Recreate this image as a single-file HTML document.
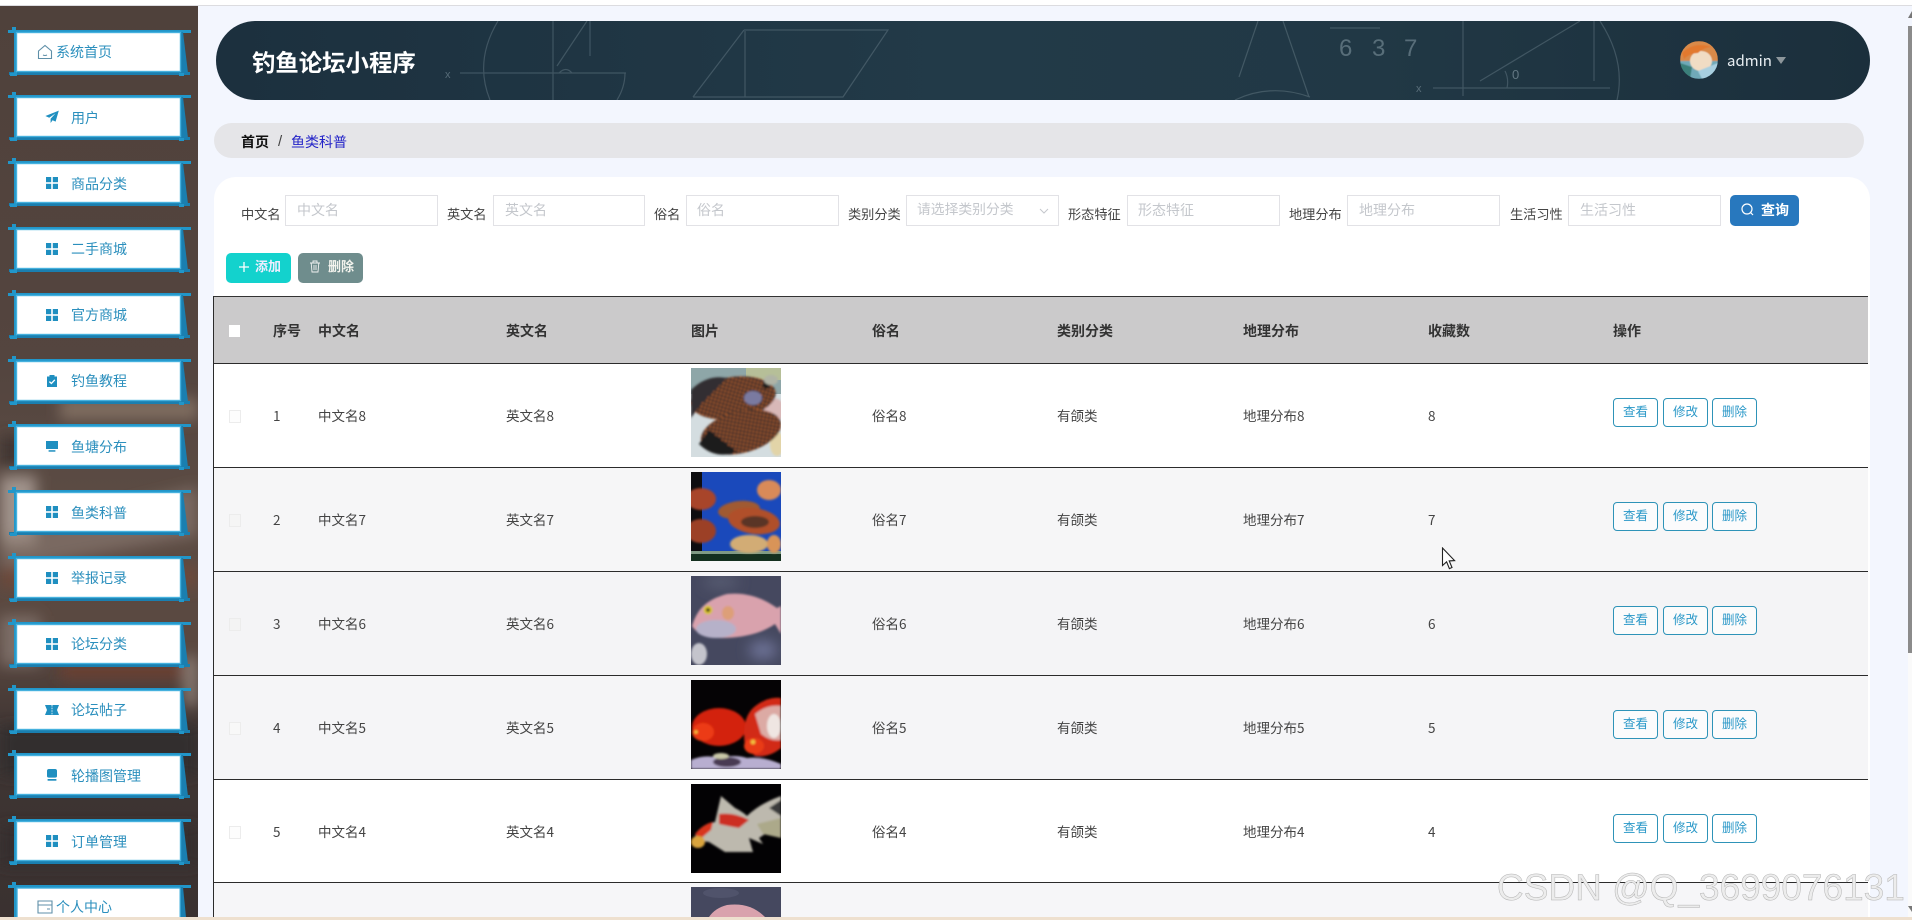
<!DOCTYPE html>
<html lang="zh-CN"><head><meta charset="utf-8"><title>钓鱼论坛小程序</title>
<style>
html,body{margin:0;padding:0;width:1912px;height:920px;overflow:hidden;background:#f3f6fe;font-family:"Liberation Sans","Noto Sans CJK SC",sans-serif}
#wrap{position:relative;width:1912px;height:920px;overflow:hidden;background:#f3f6fe}
.a,.t,.ph,.l,.h,.c,.b,.m{position:absolute;white-space:nowrap}
.t,.l,.h,.c,.ph,.m{line-height:20px}
.l{font-size:13.2px;color:#444;top:205px}
.ph{font-size:14px;color:#c4c7cc;top:200px}
.inp{position:absolute;top:195px;height:29px;border:1px solid #e2e2e6;background:#fff;box-sizing:content-box}
.h{font-size:14px;font-weight:bold;color:#333;top:321px}
.r{position:absolute;left:0;width:0;height:0}
.bg{position:absolute;left:214px;top:0;width:1654px;height:103px}
.line{position:absolute;left:214px;width:1654px;height:1px;background:#2b2b2b}
.c{font-size:13.5px;color:#444;top:42px;font-family:"Noto Sans CJK SC","Liberation Sans",sans-serif}
.b{top:35px;width:43px;height:27px;border:1px solid #2e93b8;border-radius:4px;text-align:center;line-height:27px;font-size:12.5px;color:#2a98c8;background:rgba(255,255,255,.6)}
.cb{position:absolute;left:229px;top:47px;width:10px;height:11px;border:1px solid #ececec;background:#fdfdfd}
.fish{position:absolute;left:691px;top:5px;width:90px;height:89px}
.m{left:71px;font-size:14px;color:#2b8fbd;margin-top:-9.5px}
.fr,.ic{position:absolute}
.fr{left:0;width:198px;height:50px;margin-top:-25px}
.ic{width:14px;height:14px;left:45px;margin-top:-7px}
</style></head><body>
<div id="wrap">

<svg width="0" height="0" style="position:absolute">
<defs>
<symbol id="frame" viewBox="0 0 198 50">
<rect x="8" y="3" width="183" height="3" fill="#2196c9"/>
<rect x="9" y="45" width="181" height="3" fill="#1a7fb0"/>
<rect x="14" y="3" width="3" height="44" fill="#2296c8"/>
<polygon points="180,5 183,5 188,46 180,47" fill="#1a7fb0"/>
<rect x="12" y="0" width="4" height="4" fill="#2196c9"/>
<rect x="10" y="46" width="7" height="3" fill="#2196c9"/>
<rect x="179" y="46" width="5" height="3" fill="#2196c9"/>
<rect x="16.5" y="5.5" width="164" height="39" fill="#fff" stroke="#46b1de" stroke-width="1.4"/>
</symbol>
<symbol id="grid" viewBox="0 0 14 14"><g fill="#1f8fc0"><rect x="1" y="1" width="5.2" height="5.2"/><rect x="7.8" y="1" width="5.2" height="5.2"/><rect x="1" y="7.8" width="5.2" height="5.2"/><rect x="7.8" y="7.8" width="5.2" height="5.2"/></g></symbol>
<symbol id="plane" viewBox="0 0 14 14"><path d="M13.8 0.6 L0.4 6 L4.2 7.8 L10.5 3.4 L5.6 8.8 L5.6 13 L7.6 10.2 L10.6 11.6Z" fill="#1f8fc0"/></symbol>
<symbol id="clip" viewBox="0 0 14 14"><path d="M2 2.5H4.5V1H9.5V2.5H12V13H2Z" fill="#1f8fc0"/><path d="M4.4 7.6L6.4 9.5L9.8 5.8" fill="none" stroke="#fff" stroke-width="1.3"/></symbol>
<symbol id="mon" viewBox="0 0 14 14"><path d="M1 2H13V10H1Z" fill="#1f8fc0"/><rect x="3.6" y="11.2" width="6.8" height="1.5" fill="#1f8fc0"/></symbol>
<symbol id="mon2" viewBox="0 0 14 14"><path d="M2 3Q2 1 4 1H10Q12 1 12 3V8Q12 9.6 10 9.6H4Q2 9.6 2 8Z" fill="#1f8fc0"/><rect x="2.6" y="11" width="8.8" height="1.7" fill="#1f8fc0"/></symbol>
<symbol id="tick" viewBox="0 0 14 14"><path d="M0 2H14L12 7L14 12H0L2 7Z" fill="#1f8fc0"/><path d="M7 2V12" stroke="#fff" stroke-width=".8" stroke-dasharray="1.6 1"/></symbol>
<filter id="sb"><feGaussianBlur stdDeviation="1.1"/></filter>
<filter id="sa"><feGaussianBlur stdDeviation=".5"/></filter>
<filter id="bl"><feGaussianBlur stdDeviation="7"/></filter>
<pattern id="sp" width="3.6" height="3.6" patternUnits="userSpaceOnUse" patternTransform="rotate(25)"><rect width="3.6" height="3.6" fill="#3e2f2c"/><circle cx="1.6" cy="1.6" r="1" fill="#c8682c"/></pattern>
<symbol id="f3" viewBox="0 0 90 89">
<rect width="90" height="89" fill="#45485f"/>
<g filter="url(#bl)"><ellipse cx="72" cy="74" rx="14" ry="9" fill="#70759a"/><ellipse cx="30" cy="6" rx="18" ry="6" fill="#5a5e74"/></g>
<g filter="url(#sb)"><ellipse cx="8" cy="78" rx="8" ry="11" fill="#c4c4cc"/><path d="M1 50C6 34 14 24 36 18C56 16 72 22 86 32L90 30V58L84 48C70 58 50 62 30 62C16 62 6 58 1 50Z" fill="#d9a2ad"/>
<ellipse cx="25" cy="53" rx="20" ry="9" fill="#b6b1c9"/><ellipse cx="37" cy="37" rx="6" ry="7" fill="#dd9f78"/><circle cx="17" cy="34" r="4.5" fill="#d8c22a"/><circle cx="17" cy="34" r="1.8" fill="#1a1a1a"/></g>
</symbol>
</defs>
</svg>

<!-- top strip -->
<div class="a" style="left:0;top:0;width:1912px;height:5px;background:#fff"></div>
<div class="a" style="left:0;top:5px;width:1912px;height:1px;background:#dcdce0"></div>

<!-- sidebar -->
<div class="a" style="left:0;top:6px;width:198px;height:911px;overflow:hidden;background:linear-gradient(#4f413b 0,#54453f 40%,#5c4c44 55%,#5a4840 70%,#3f3533 80%,#3a3130 100%)">
<svg width="198" height="911" style="position:absolute;left:0;top:0">
<g filter="url(#bl)">
<rect x="60" y="392" width="138" height="22" fill="#8a7668" opacity=".8"/>
<rect x="0" y="430" width="30" height="30" fill="#3f3431"/>
<rect x="0" y="470" width="36" height="70" fill="#a0938b"/>
<polygon points="0,530 198,480 198,530 0,565" fill="#8d7d74" opacity=".6"/>
<rect x="0" y="560" width="198" height="22" fill="#6d4a3b"/>
<rect x="0" y="610" width="40" height="50" fill="#847670" opacity=".8"/>
<rect x="60" y="655" width="138" height="18" fill="#6a4032"/>
<rect x="184" y="650" width="14" height="50" fill="#8a7d75"/>
<rect x="0" y="720" width="198" height="50" fill="#332e2d"/>
<rect x="0" y="820" width="198" height="40" fill="#362e2d"/>
</g></svg>
</div>

<svg class="fr" style="top:51.5px"><use href="#frame"/></svg>
<svg class="fr" style="top:117.3px"><use href="#frame"/></svg>
<svg class="fr" style="top:183.1px"><use href="#frame"/></svg>
<svg class="fr" style="top:248.9px"><use href="#frame"/></svg>
<svg class="fr" style="top:314.7px"><use href="#frame"/></svg>
<svg class="fr" style="top:380.5px"><use href="#frame"/></svg>
<svg class="fr" style="top:446.3px"><use href="#frame"/></svg>
<svg class="fr" style="top:512.1px"><use href="#frame"/></svg>
<svg class="fr" style="top:577.9px"><use href="#frame"/></svg>
<svg class="fr" style="top:643.7px"><use href="#frame"/></svg>
<svg class="fr" style="top:709.5px"><use href="#frame"/></svg>
<svg class="fr" style="top:775.3px"><use href="#frame"/></svg>
<svg class="fr" style="top:841.1px"><use href="#frame"/></svg>
<svg class="a" style="left:0;top:882px" width="198" height="35" viewBox="0 0 198 35">
<rect x="8" y="3" width="183" height="3" fill="#2196c9"/>
<rect x="14" y="3" width="3" height="32" fill="#2296c8"/>
<polygon points="180,5 183,5 186,35 180,35" fill="#1a7fb0"/>
<rect x="12" y="0" width="4" height="4" fill="#2196c9"/>
<rect x="17" y="6" width="163" height="29" fill="#fff"/>
<rect x="16.5" y="5.5" width="164" height="1.2" fill="#46b1de"/>
<rect x="16.5" y="5.5" width="1.2" height="29.5" fill="#46b1de"/>
<rect x="179.5" y="5.5" width="1.2" height="29.5" fill="#46b1de"/>
</svg>

<svg class="a" style="left:37px;top:44px" width="16" height="16" viewBox="0 0 16 16"><path d="M1.5 7L8 1.5L14.5 7V14.5H1.5Z M6 11Q8 12 10 11" fill="none" stroke="#5f8fa8" stroke-width="1.1"/></svg>
<div class="m" style="left:56px;top:51.5px">系统首页</div>
<svg class="ic" style="top:117.3px"><use href="#plane"/></svg><div class="m" style="top:117.3px">用户</div>
<svg class="ic" style="top:183.1px"><use href="#grid"/></svg><div class="m" style="top:183.1px">商品分类</div>
<svg class="ic" style="top:248.9px"><use href="#grid"/></svg><div class="m" style="top:248.9px">二手商城</div>
<svg class="ic" style="top:314.7px"><use href="#grid"/></svg><div class="m" style="top:314.7px">官方商城</div>
<svg class="ic" style="top:380.5px"><use href="#clip"/></svg><div class="m" style="top:380.5px">钓鱼教程</div>
<svg class="ic" style="top:446.3px"><use href="#mon"/></svg><div class="m" style="top:446.3px">鱼塘分布</div>
<svg class="ic" style="top:512.1px"><use href="#grid"/></svg><div class="m" style="top:512.1px">鱼类科普</div>
<svg class="ic" style="top:577.9px"><use href="#grid"/></svg><div class="m" style="top:577.9px">举报记录</div>
<svg class="ic" style="top:643.7px"><use href="#grid"/></svg><div class="m" style="top:643.7px">论坛分类</div>
<svg class="ic" style="top:709.5px"><use href="#tick"/></svg><div class="m" style="top:709.5px">论坛帖子</div>
<svg class="ic" style="top:775.3px"><use href="#mon2"/></svg><div class="m" style="top:775.3px">轮播图管理</div>
<svg class="ic" style="top:841.1px"><use href="#grid"/></svg><div class="m" style="top:841.1px">订单管理</div>
<svg class="a" style="left:37px;top:899px" width="16" height="16" viewBox="0 0 16 16"><path d="M1 2H15V14H1Z M1 6H15 M10 10H13" fill="none" stroke="#5f8fa8" stroke-width="1.1"/></svg>
<div class="m" style="left:56px;top:897px;margin-top:0">个人中心</div>

<!-- header -->
<div class="a" style="left:216px;top:21px;width:1654px;height:79px;border-radius:40px;background:linear-gradient(90deg,#1c303e 0,#223a48 45%,#213845 70%,#1b2f3c 100%);overflow:hidden">
<svg width="1654" height="79" style="position:absolute;left:0;top:0" fill="none" stroke="#8fa3ad" stroke-opacity=".3" stroke-width="1.2">
<path d="M282 0Q258 40 274 79 M409 52Q409 66 401 79 M337 0V79 M244 52H410 M341 45L371 0 M374 0V35 M343 52Q350 45 356 52"/>
<path d="M477 76L528 9 M528 9H672 L627 76H477 M529 10V76" />
<path d="M1042 0L1023 56 M1067 0L1093 76 M1019 79Q1055 62 1094 76"/>
<path d="M1114 7H1164"/>
<path d="M1247 0V75 M1264 60L1364 0 M1378 0V60 M1384 0Q1410 40 1401 79 M1217 67H1394 M1289 50Q1293 58 1291 67"/>
<text x="1123" y="35" font-size="24" fill="#8fa3ad" fill-opacity=".5" stroke="none" font-family="Liberation Sans">6</text>
<text x="1156" y="35" font-size="24" fill="#8fa3ad" fill-opacity=".5" stroke="none" font-family="Liberation Sans">3</text>
<text x="1188" y="35" font-size="24" fill="#8fa3ad" fill-opacity=".5" stroke="none" font-family="Liberation Sans">7</text>
<text x="1296" y="58" font-size="13" fill="#8fa3ad" fill-opacity=".6" stroke="none" font-family="Liberation Sans">0</text>
<text x="1200" y="71" font-size="11" fill="#8fa3ad" fill-opacity=".5" stroke="none" font-family="Liberation Sans">x</text>
<text x="229" y="57" font-size="11" fill="#8fa3ad" fill-opacity=".5" stroke="none" font-family="Liberation Sans">x</text>
</svg>
</div>
<div class="t" style="left:252px;top:48px;font-size:23.4px;line-height:30px;font-weight:bold;color:#fff">钓鱼论坛小程序</div>
<svg class="a" style="left:1680px;top:41px" width="38" height="38" viewBox="0 0 38 38">
<defs><clipPath id="av"><circle cx="19" cy="19" r="19"/></clipPath></defs>
<g clip-path="url(#av)"><g filter="url(#sa)"><rect width="38" height="38" fill="#d98a4a"/><rect y="20" width="38" height="18" fill="#6fa9b8"/><ellipse cx="21" cy="20" rx="11" ry="10" fill="#f0dcc4"/><path d="M0 22L12 26L10 38H0Z" fill="#3b7f7a"/><path d="M18 30L38 22V38H22Z" fill="#a8cfe0"/><path d="M2 12Q14 0 32 6Q24 6 18 12Q10 12 4 18Z" fill="#e2792e"/></g></g></svg>
<div class="t" style="left:1727px;top:51px;font-size:15px;color:#e8eef2;font-family:'Noto Sans CJK SC','Liberation Sans',sans-serif">admin</div>
<div class="a" style="left:1776px;top:57px;width:0;height:0;border-left:5px solid transparent;border-right:5px solid transparent;border-top:7px solid #8d969b"></div>

<!-- breadcrumb -->
<div class="a" style="left:214px;top:123px;width:1650px;height:35px;border-radius:18px;background:#e5e5e8"></div>
<div class="t" style="left:241px;top:132px;font-size:14px;font-weight:bold;color:#111">首页</div>
<div class="t" style="left:278px;top:132px;font-size:15px;color:#444">/</div>
<div class="t" style="left:291px;top:132px;font-size:14px;color:#2424c8">鱼类科普</div>

<!-- panel -->
<div class="a" style="left:214px;top:177px;width:1656px;height:740px;background:#fff;border-radius:22px 22px 0 0"></div>

<!-- filters -->
<div class="l" style="left:241px">中文名</div><div class="inp" style="left:285px;width:151px"></div><div class="ph" style="left:297px">中文名</div>
<div class="l" style="left:447px">英文名</div><div class="inp" style="left:493px;width:150px"></div><div class="ph" style="left:505px">英文名</div>
<div class="l" style="left:654px">俗名</div><div class="inp" style="left:686px;width:151px"></div><div class="ph" style="left:697px">俗名</div>
<div class="l" style="left:848px">类别分类</div><div class="inp" style="left:906px;width:151px"></div><div class="ph" style="left:917px;font-size:13.8px">请选择类别分类</div>
<svg class="a" style="left:1039px;top:207px" width="10" height="8" viewBox="0 0 10 8"><path d="M1 2L5 6L9 2" fill="none" stroke="#c4c7cc"/></svg>
<div class="l" style="left:1068px">形态特征</div><div class="inp" style="left:1127px;width:151px"></div><div class="ph" style="left:1138px">形态特征</div>
<div class="l" style="left:1289px">地理分布</div><div class="inp" style="left:1347px;width:151px"></div><div class="ph" style="left:1359px">地理分布</div>
<div class="l" style="left:1510px">生活习性</div><div class="inp" style="left:1568px;width:151px"></div><div class="ph" style="left:1580px">生活习性</div>
<div class="a" style="left:1730px;top:195px;width:69px;height:31px;background:#2878be;border-radius:5px"></div>
<svg class="a" style="left:1740px;top:202px" width="15" height="15" viewBox="0 0 15 15"><circle cx="7" cy="7" r="5" fill="none" stroke="#fff" stroke-width="1.2"/><path d="M10.5 10.5L13 13" stroke="#fff" stroke-width="1.2"/></svg>
<div class="t" style="left:1761px;top:200px;font-size:14px;font-weight:bold;color:#fff">查询</div>

<div class="a" style="left:226px;top:253px;width:65px;height:30px;background:#13d2cd;border-radius:5px"></div>
<svg class="a" style="left:238px;top:261px" width="12" height="12" viewBox="0 0 12 12"><path d="M6 1V11M1 6H11" stroke="#fff" stroke-width="1.3"/></svg>
<div class="t" style="left:255px;top:257px;font-size:13px;color:#eef;font-weight:bold">添加</div>
<div class="a" style="left:298px;top:253px;width:65px;height:30px;background:#6f8d8d;border-radius:5px"></div>
<svg class="a" style="left:309px;top:260px" width="12" height="13" viewBox="0 0 12 13"><path d="M1 3H11M4 3V1H8V3M2.2 3L3 12H9L9.8 3M5 5V10M7 5V10" fill="none" stroke="#f2f2f2" stroke-width=".9"/></svg>
<div class="t" style="left:328px;top:257px;font-size:13px;color:#f4f4ee;font-weight:bold">删除</div>

<!-- table head -->
<div class="a" style="left:214px;top:296px;width:1654px;height:67px;background:#cbcacb"></div>
<div class="a" style="left:214px;top:296px;width:1654px;height:1px;background:#333"></div>
<div class="a" style="left:229px;top:325px;width:11px;height:12px;background:#fff"></div>
<div class="h" style="left:273px">序号</div>
<div class="h" style="left:318px">中文名</div>
<div class="h" style="left:506px">英文名</div>
<div class="h" style="left:691px">图片</div>
<div class="h" style="left:872px">俗名</div>
<div class="h" style="left:1057px">类别分类</div>
<div class="h" style="left:1243px">地理分布</div>
<div class="h" style="left:1428px">收藏数</div>
<div class="h" style="left:1613px">操作</div>

<!-- rows -->
<div class="r" style="top:363px"><div class="bg" style="background:#fff;height:104px"></div><div class="line" style="top:0"></div><div class="cb"></div>
<div class="c" style="left:273px">1</div><div class="c" style="left:318px">中文名8</div><div class="c" style="left:506px">英文名8</div>
<svg class="fish" viewBox="0 0 90 89"><rect width="90" height="89" fill="#d4dde0"/><rect width="90" height="26" fill="#8ea6a8"/><rect x="55" width="35" height="12" fill="#b6bf98"/><g filter="url(#sb)"><ellipse cx="82" cy="42" rx="12" ry="12" fill="#d8b8b8"/><ellipse cx="86" cy="76" rx="7" ry="12" fill="#e2d4a8"/><ellipse cx="42" cy="30" rx="43" ry="21" fill="url(#sp)" transform="rotate(-8 42 30)"/><ellipse cx="50" cy="64" rx="41" ry="21" fill="url(#sp)" transform="rotate(-14 50 64)"/><path d="M0 22Q16 6 36 10L10 36L0 50Z" fill="#332e33"/><path d="M8 76Q24 92 46 84L18 62Z" fill="#1c1a1c"/><circle cx="75" cy="18" r="3" fill="#1b1b1b"/><ellipse cx="62" cy="30" rx="9" ry="7" fill="#7a7aa0"/><ellipse cx="80" cy="12" rx="7" ry="5" fill="#b0b4a6"/></g></svg>
<div class="c" style="left:872px">俗名8</div><div class="c" style="left:1057px">有颌类</div><div class="c" style="left:1243px">地理分布8</div><div class="c" style="left:1428px">8</div>
<div class="b" style="left:1613px">查看</div><div class="b" style="left:1663px">修改</div><div class="b" style="left:1712px">删除</div></div>

<div class="r" style="top:467px"><div class="bg" style="background:#f6f6f7;height:104px"></div><div class="line" style="top:0"></div><div class="cb" style="background:#f5f5f5"></div>
<div class="c" style="left:273px">2</div><div class="c" style="left:318px">中文名7</div><div class="c" style="left:506px">英文名7</div>
<svg class="fish" viewBox="0 0 90 89"><rect width="90" height="89" fill="#1a49bb"/><rect y="0" width="11" height="82" fill="#0d0d10"/><rect y="82" width="90" height="7" fill="#14301f"/><rect y="79" width="90" height="3" fill="#7f9a84"/><g filter="url(#sb)"><ellipse cx="10" cy="27" rx="15" ry="11" fill="#a8442a"/><ellipse cx="10" cy="59" rx="15" ry="12" fill="#9c4128"/><ellipse cx="48" cy="38" rx="21" ry="9" fill="#a05a30" transform="rotate(-6 48 38)"/><ellipse cx="63" cy="49" rx="26" ry="13" fill="#b0502a" transform="rotate(8 63 49)"/><ellipse cx="64" cy="50" rx="14" ry="6" fill="#5a3628"/><ellipse cx="78" cy="18" rx="12" ry="10" fill="#d98a58"/><ellipse cx="58" cy="72" rx="19" ry="9" fill="#d2ac74"/><ellipse cx="83" cy="72" rx="7" ry="9" fill="#d99458"/></g></svg>
<div class="c" style="left:872px">俗名7</div><div class="c" style="left:1057px">有颌类</div><div class="c" style="left:1243px">地理分布7</div><div class="c" style="left:1428px">7</div>
<div class="b" style="left:1613px">查看</div><div class="b" style="left:1663px">修改</div><div class="b" style="left:1712px">删除</div></div>

<div class="r" style="top:571px"><div class="bg" style="background:#f4f4f6;height:104px"></div><div class="line" style="top:0"></div><div class="cb" style="background:#f3f3f3"></div>
<div class="c" style="left:273px">3</div><div class="c" style="left:318px">中文名6</div><div class="c" style="left:506px">英文名6</div>
<svg class="fish" viewBox="0 0 90 89"><use href="#f3"/></svg>
<div class="c" style="left:872px">俗名6</div><div class="c" style="left:1057px">有颌类</div><div class="c" style="left:1243px">地理分布6</div><div class="c" style="left:1428px">6</div>
<div class="b" style="left:1613px">查看</div><div class="b" style="left:1663px">修改</div><div class="b" style="left:1712px">删除</div></div>

<div class="r" style="top:675px"><div class="bg" style="background:#f5f5f7;height:104px"></div><div class="line" style="top:0"></div><div class="cb" style="background:#f8f8f8"></div>
<div class="c" style="left:273px">4</div><div class="c" style="left:318px">中文名5</div><div class="c" style="left:506px">英文名5</div>
<svg class="fish" viewBox="0 0 90 89"><rect width="90" height="89" fill="#050305"/><g filter="url(#sb)"><ellipse cx="28" cy="47" rx="27" ry="19" fill="#d3200e"/><ellipse cx="12" cy="52" rx="11" ry="9" fill="#ec3a12"/><path d="M54 66Q50 40 62 28Q76 16 90 18V68Q78 78 64 76Z" fill="#d22a14"/><path d="M64 34Q76 24 90 26V60Q80 62 70 54Z" fill="#dcaaa4"/><ellipse cx="83" cy="46" rx="7" ry="12" fill="#efe6e2"/><ellipse cx="63" cy="66" rx="10" ry="8" fill="#e93a12"/><circle cx="62" cy="62" r="2.4" fill="#f0c040"/><circle cx="5" cy="52" r="1.8" fill="#f0c040"/><path d="M0 89V80Q14 74 28 78Q44 74 56 78Q72 76 90 84V89Z" fill="#b8aed0"/><ellipse cx="36" cy="82" rx="14" ry="5" fill="#4a3a52"/><ellipse cx="30" cy="76" rx="8" ry="3" fill="#c9c8a8"/></g></svg>
<div class="c" style="left:872px">俗名5</div><div class="c" style="left:1057px">有颌类</div><div class="c" style="left:1243px">地理分布5</div><div class="c" style="left:1428px">5</div>
<div class="b" style="left:1613px">查看</div><div class="b" style="left:1663px">修改</div><div class="b" style="left:1712px">删除</div></div>

<div class="r" style="top:779px"><div class="bg" style="background:#fff;height:103px"></div><div class="line" style="top:0"></div><div class="cb"></div>
<div class="c" style="left:273px">5</div><div class="c" style="left:318px">中文名4</div><div class="c" style="left:506px">英文名4</div>
<svg class="fish" viewBox="0 0 90 89"><rect width="90" height="89" fill="#030204"/><g filter="url(#sb)"><path d="M24 38L30 12L44 24Q52 28 56 32Q68 20 90 12V50L74 50L68 54L72 60L58 54L62 68L34 68L18 58L2 56Q10 40 24 38Z" fill="#bdb9ae"/><path d="M28 30Q44 28 58 36L48 44Q36 42 28 40Z" fill="#cc2f20"/><path d="M4 50Q12 40 22 38L20 46L8 56Z" fill="#d8341e"/><ellipse cx="7" cy="58" rx="7" ry="6" fill="#d9a43c"/><path d="M66 40L90 34V54L72 50Z" fill="#aca98a"/><path d="M78 24L90 16V32Z" fill="#3a3a3a"/></g></svg>
<div class="c" style="left:872px">俗名4</div><div class="c" style="left:1057px">有颌类</div><div class="c" style="left:1243px">地理分布4</div><div class="c" style="left:1428px">4</div>
<div class="b" style="left:1613px">查看</div><div class="b" style="left:1663px">修改</div><div class="b" style="left:1712px">删除</div></div>

<div class="a" style="left:214px;top:882px;width:1654px;height:35px;background:#f6f6f8"></div>
<div class="a" style="left:214px;top:882px;width:1654px;height:1px;background:#2b2b2b"></div>
<svg class="a" style="left:691px;top:887px" width="90" height="30" viewBox="0 0 90 30"><rect width="90" height="30" fill="#45485f"/><ellipse cx="30" cy="6" rx="18" ry="5" fill="#50536b"/><path d="M18 30C22 24 28 20 36 18C52 16 64 20 74 30Z" fill="#d9a2ad"/></svg>

<!-- table left border -->
<div class="a" style="left:213px;top:296px;width:1px;height:621px;background:#2b2b2b"></div>

<!-- cursor -->
<svg class="a" style="left:1441px;top:547px" width="16" height="24" viewBox="0 0 16 24"><path d="M1.5 1V18.5L5.6 14.8L8.4 21.6L11 20.5L8.2 13.9L13.6 13.6Z" fill="#fff" stroke="#222" stroke-width="1.1"/></svg>

<!-- scrollbar -->
<div class="a" style="left:1908px;top:26px;width:4px;height:627px;background:#8b8b8b"></div>
<div class="a" style="left:1908px;top:653px;width:4px;height:264px;background:#fafafa"></div>
<div class="a" style="left:1908px;top:11px;width:0;height:0;border-left:4px solid transparent;border-bottom:7px solid #777"></div>
<div class="a" style="left:1908px;top:906px;width:0;height:0;border-left:4px solid transparent;border-top:6px solid #777"></div>

<!-- bottom strip -->
<div class="a" style="left:0;top:917px;width:1912px;height:3px;background:#eee0cf"></div>

<!-- watermark -->
<div class="a" style="left:1497px;top:866px;font-size:37px;line-height:44px;color:#ececec;-webkit-text-stroke:.5px #b4b4b4;font-family:'Liberation Sans',sans-serif">CSDN @Q_3699076131</div>

</div>
</body></html>
